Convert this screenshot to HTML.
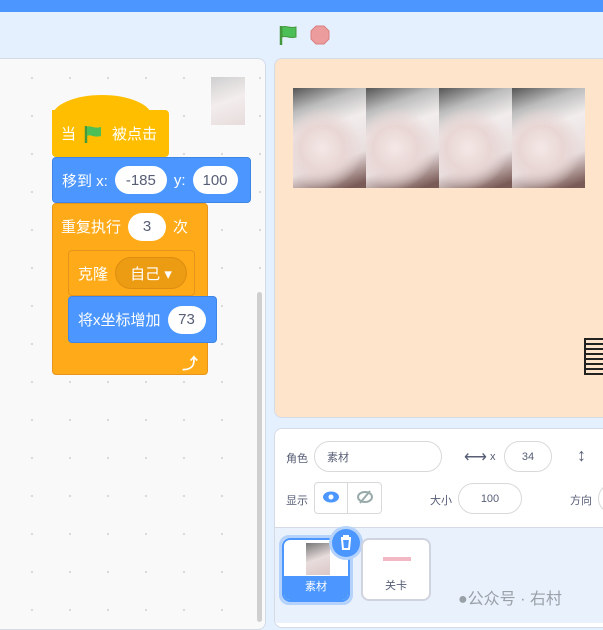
<!DOCTYPE html><html><head><style>
body{margin:0;width:603px;height:620px;overflow:hidden;background:#e5f0ff;font-family:"Liberation Sans","Noto Sans CJK SC",sans-serif;position:relative}
.a{position:absolute}
.blk{position:absolute;color:#fff;font-size:15px;display:flex;align-items:center;box-sizing:border-box;padding-left:9px}
.in{background:#fff;color:#575e75;border-radius:16px;height:28px;display:inline-flex;align-items:center;justify-content:center;font-size:15px;margin:0 7px}
.tile{position:absolute;top:88px;width:73px;height:100px;background:radial-gradient(circle at 40% 60%,#f4e8e6 0,#e8d6d4 30%,transparent 55%),linear-gradient(160deg,#555 0,#bdbdbd 20%,#f2eded 40%,#e9dede 70%,#7a5a56 95%)}
.lbl{font-size:11px;color:#575e75}
.pill{position:absolute;border:1px solid #d9d9d9;border-radius:16px;height:31px;background:#fff;display:flex;align-items:center;justify-content:center;font-size:11px;color:#575e75;box-sizing:border-box}
</style></head><body>
<div class="a" style="left:0;top:0;width:603px;height:12px;background:#4c97ff"></div>
<svg class="a" style="left:278px;top:24px" width="22" height="22" viewBox="0 0 22 22"><path d="M3 2v19" stroke="#45993d" stroke-width="2.5"/><path d="M4 3c4-2 7 2 14 0v10c-7 2-10-2-14 0z" fill="#4cbf56" stroke="#45993d" stroke-width="1"/></svg>
<svg class="a" style="left:310px;top:25px" width="20" height="20" viewBox="0 0 20 20"><polygon points="6,1 14,1 19,6 19,14 14,19 6,19 1,14 1,6" fill="#ec9c9c" stroke="#d98080"/></svg>
<div class="a" style="left:-8px;top:58px;width:272px;height:570px;background:#f9f9f9;border:1px solid #d5dbe6;border-radius:8px;background-image:radial-gradient(#d8d8d8 1px,transparent 1.3px);background-size:38px 38px;background-position:20px 0"></div>
<div class="a" style="left:257px;top:292px;width:5px;height:330px;background:#cfcfcf;border-radius:3px"></div>
<div class="a" style="left:211px;top:77px;width:34px;height:48px;background:linear-gradient(160deg,#cfcfcf,#f3eded 50%,#e7dcdc)"></div>
<div class="a" style="left:52px;top:95px;width:100px;height:40px;background:#ffbf00;border-radius:50px 50px 0 0/22px 22px 0 0"></div>
<div class="blk" style="left:52px;top:110px;width:117px;height:47px;background:#ffbf00;border-radius:0 4px 4px 4px">当 <svg width="20" height="20" style="margin:0 8px" viewBox="0 0 20 20"><path d="M2 2v17" stroke="#45993d" stroke-width="2.5"/><path d="M3 3c4-2 6 2 14 0v9c-8 2-10-2-14 0z" fill="#4cbf56"/></svg> 被点击</div>
<div class="blk" style="left:52px;top:157px;width:199px;height:46px;background:#4c97ff;border-radius:4px;border:1px solid #3f85e6">移到 x:<span class="in" style="width:52px">-185</span>y:<span class="in" style="width:45px">100</span></div>
<div class="a" style="left:52px;top:203px;width:156px;height:172px;background:#ffab19;border-radius:4px;border:1px solid #e6951a;box-sizing:border-box"></div>
<div class="blk" style="left:52px;top:203px;width:156px;height:47px">重复执行<span class="in" style="width:38px">3</span>次</div>
<div class="blk" style="left:68px;top:250px;width:127px;height:46px;background:#ffab19;border:1px solid #e6951a;border-radius:4px">克隆<span style="background:#ec9c13;border:1px solid #dd8d10;border-radius:16px;height:30px;width:70px;display:inline-flex;align-items:center;justify-content:center;margin-left:7px">自己 ▾</span></div>
<div class="blk" style="left:68px;top:296px;width:149px;height:47px;background:#4c97ff;border:1px solid #3f85e6;border-radius:4px">将x坐标增加<span class="in" style="width:38px">73</span></div>
<div class="a" style="left:182px;top:350px;color:#fff;font-size:16px;font-weight:bold">⤴</div>
<div class="a" style="left:274px;top:58px;width:340px;height:360px;background:#ffe4cc;border:1px solid #d5dbe6;border-radius:8px;box-sizing:border-box"></div>
<div class="tile" style="left:293px"></div><div class="tile" style="left:366px"></div><div class="tile" style="left:439px"></div><div class="tile" style="left:512px"></div>
<div class="a" style="left:584px;top:338px;width:19px;height:37px;border-left:2px solid #222;background:repeating-linear-gradient(#222 0 2px,transparent 2px 5px)"></div>
<div class="a" style="left:274px;top:428px;width:340px;height:200px;background:#fff;border:1px solid #d5dbe6;border-radius:8px;box-sizing:border-box"></div>
<div class="a" style="left:275px;top:527px;width:330px;height:95px;background:#e9f1fc;border-top:1px solid #d5dbe6"></div>
<div class="a lbl" style="left:286px;top:450px">角色</div>
<div class="pill" style="left:314px;top:441px;width:128px;justify-content:flex-start;padding-left:12px">素材</div>
<div class="a" style="left:464px;top:447px;font-size:16px;color:#575e75">⟷</div>
<div class="a lbl" style="left:490px;top:451px">x</div>
<div class="pill" style="left:504px;top:441px;width:48px">34</div>
<div class="a" style="left:577px;top:445px;font-size:18px;color:#575e75;font-weight:bold">↕</div>
<div class="a lbl" style="left:286px;top:492px">显示</div>
<div class="a" style="left:314px;top:482px;width:68px;height:32px;border:1px solid #d9d9d9;border-radius:4px;box-sizing:border-box;background:#fff"></div>
<div class="a" style="left:347px;top:482px;width:1px;height:32px;background:#d9d9d9"></div>
<svg class="a" style="left:322px;top:490px" width="18" height="14"><ellipse cx="9" cy="7" rx="8" ry="5.5" fill="#4c97ff"/><circle cx="9" cy="7" r="2.5" fill="#fff"/></svg>
<svg class="a" style="left:357px;top:490px" width="16" height="14"><ellipse cx="8" cy="7" rx="7" ry="5" fill="none" stroke="#9aa" stroke-width="2"/><path d="M3 13L13 1" stroke="#9aa" stroke-width="2"/></svg>
<div class="a lbl" style="left:430px;top:492px">大小</div>
<div class="pill" style="left:458px;top:483px;width:64px">100</div>
<div class="a lbl" style="left:570px;top:492px">方向</div>
<div class="pill" style="left:598px;top:483px;width:40px"></div>
<div class="a" style="left:279px;top:535px;width:74px;height:70px;border:3px solid #b5d2fa;border-radius:10px;box-sizing:border-box"></div>
<div class="a" style="left:282px;top:538px;width:68px;height:64px;background:#fff;border:2px solid #4c97ff;border-radius:8px;box-sizing:border-box;overflow:hidden"><div style="position:absolute;left:22px;top:3px;width:24px;height:32px;background:linear-gradient(160deg,#777,#e8dcdc 50%,#d9c8c6)"></div><div style="position:absolute;left:0;bottom:0;width:100%;height:24px;background:#4c97ff;color:#fff;font-size:11px;text-align:center;line-height:22px">素材</div></div>
<div class="a" style="left:332px;top:529px;width:28px;height:28px;border-radius:50%;background:#4c97ff;box-shadow:0 0 0 3px #b5d2fa"><svg width="28" height="28"><path d="M9 9h10M12 9V7h4v2M10 10l1 10h6l1-10z" fill="none" stroke="#fff" stroke-width="2"/></svg></div>
<div class="a" style="left:361px;top:538px;width:70px;height:63px;background:#fff;border:2px solid #d0d4de;border-radius:8px;box-sizing:border-box"><div style="position:absolute;left:20px;top:17px;width:28px;height:4px;background:#f3b8c4"></div><div class="lbl" style="position:absolute;left:0;width:100%;bottom:6px;text-align:center">关卡</div></div>
<div class="a" style="left:458px;top:585px;font-size:16px;color:#9aa0a8">●公众号 · 右村</div>
</body></html>
